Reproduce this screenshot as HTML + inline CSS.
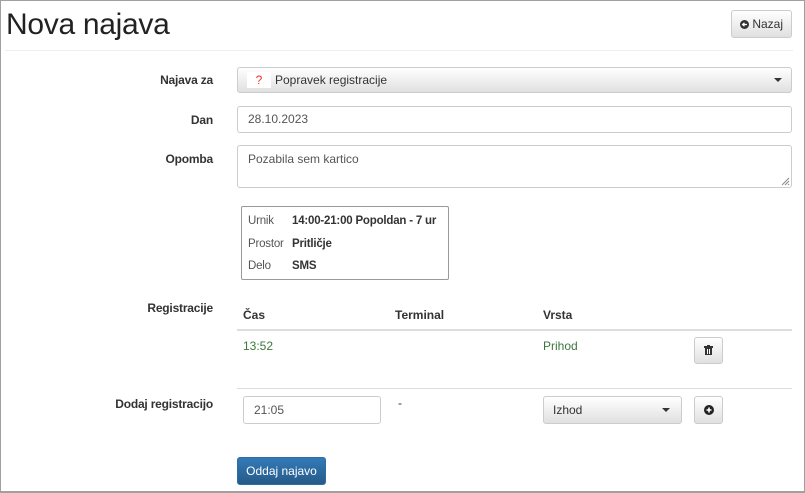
<!DOCTYPE html>
<html><head><meta charset="utf-8"><style>
*{box-sizing:border-box;margin:0;padding:0}
body{width:805px;height:493px;overflow:hidden;font-family:"Liberation Sans",sans-serif;font-size:12px;color:#333;background:#fff;position:relative}
.frame{position:absolute;left:0;top:0;width:805px;height:493px;border:1px solid #a0a0a0;border-bottom-width:2px}
.abs{position:absolute}
h1{position:absolute;left:6px;top:8px;font-size:30px;font-weight:normal;color:#222;letter-spacing:-0.3px}
.hr{position:absolute;left:5px;top:50px;width:788px;height:1px;background:#eee}
.btn{position:absolute;border:1px solid #ccc;border-radius:3px;background:linear-gradient(#fff,#e0e0e0);}
.lbl{position:absolute;right:592px;font-weight:bold;text-align:right;color:#333;letter-spacing:-0.2px}
.inp{position:absolute;border:1px solid #ccc;border-radius:3px;background:#fff;padding:0 10px;color:#555;font-size:12px}
.caret{position:absolute;width:0;height:0;border-left:4px solid transparent;border-right:4px solid transparent;border-top:4px solid #333}
.info{font-size:11.5px;letter-spacing:-0.2px}
</style></head><body>
<div class="frame"></div>
<h1>Nova najava</h1>
<div class="btn" style="left:731px;top:10px;width:61px;height:28px;font-size:12px;line-height:26px;text-align:center;color:#333"><svg width="9" height="9" style="vertical-align:-1px"><circle cx="4.5" cy="4.5" r="4.5" fill="#333"/><path d="M7 4.5H3M4.5 2.8L2.6 4.5L4.5 6.2" stroke="#fff" stroke-width="1.3" fill="none"/></svg> Nazaj</div>
<div class="hr"></div>

<div class="lbl" style="top:73px">Najava za</div>
<div class="btn" style="left:237px;top:67px;width:555px;height:26px"></div>
<div class="abs" style="left:247px;top:72px;width:24px;height:16px;background:#fff;color:#e33;text-align:center;line-height:16px">?</div>
<div class="abs" style="left:275px;top:73px;color:#333">Popravek registracije</div>
<div class="caret" style="left:774px;top:78px"></div>

<div class="lbl" style="top:113px">Dan</div>
<div class="inp" style="left:237px;top:106px;width:555px;height:27px;line-height:25px">28.10.2023</div>

<div class="lbl" style="top:152px">Opomba</div>
<div class="inp" style="left:237px;top:145px;width:555px;height:43px;padding-top:6px">Pozabila sem kartico</div>
<svg class="abs" style="left:780px;top:176px" width="10" height="10"><path d="M9 2L2 9M9 5L5 9M9 8L8 9" stroke="#888" stroke-width="1"/></svg>

<div class="abs" style="left:241px;top:206px;width:208px;height:74px;border:1px solid #999;border-radius:2px"></div>
<div class="abs info" style="left:248px;top:215px;color:#555">Urnik</div>
<div class="abs info" style="left:292px;top:215px;font-weight:bold">14:00-21:00 Popoldan - 7 ur</div>
<div class="abs info" style="left:248px;top:238px;color:#555">Prostor</div>
<div class="abs info" style="left:292px;top:238px;font-weight:bold">Pritličje</div>
<div class="abs info" style="left:248px;top:260px;color:#555">Delo</div>
<div class="abs info" style="left:292px;top:260px;font-weight:bold">SMS</div>

<div class="lbl" style="top:301px">Registracije</div>
<div class="abs" style="left:243px;top:308px;font-weight:bold">Čas</div>
<div class="abs" style="left:395px;top:308px;font-weight:bold">Terminal</div>
<div class="abs" style="left:543px;top:308px;font-weight:bold">Vrsta</div>
<div class="abs" style="left:237px;top:329px;width:555px;height:2px;background:#ddd"></div>
<div class="abs" style="left:243px;top:339px;color:#3c763d">13:52</div>
<div class="abs" style="left:543px;top:339px;color:#3c763d">Prihod</div>
<div class="btn" style="left:694px;top:337px;width:29px;height:27px"></div>
<svg class="abs" style="left:704px;top:345px" width="9" height="10"><rect x="0" y="1" width="9" height="2" fill="#333"/><rect x="3" y="0" width="3" height="1" fill="#333"/><rect x="1" y="3" width="7" height="7" fill="#333"/><rect x="3" y="4" width="1" height="5" fill="#fff"/><rect x="5" y="4" width="1" height="5" fill="#fff"/></svg>
<div class="abs" style="left:237px;top:388px;width:555px;height:1px;background:#ddd"></div>

<div class="lbl" style="top:397px">Dodaj registracijo</div>
<div class="inp" style="left:243px;top:396px;width:138px;height:28px;line-height:26px">21:05</div>
<div class="abs" style="left:398px;top:396px">-</div>
<div class="btn" style="left:543px;top:396px;width:139px;height:28px"></div>
<div class="abs" style="left:553px;top:403px;color:#333">Izhod</div>
<div class="caret" style="left:662px;top:408px"></div>
<div class="btn" style="left:694px;top:396px;width:29px;height:28px"></div>
<svg class="abs" style="left:704px;top:405px" width="10" height="10"><circle cx="5" cy="5" r="5" fill="#222"/><path d="M5 2.5V7.5M2.5 5H7.5" stroke="#fff" stroke-width="1.6"/></svg>

<div class="abs" style="left:237px;top:457px;width:89px;height:28px;border:1px solid #2e6da4;border-radius:3px;background:linear-gradient(#337ab7,#265a88);color:#fff;text-align:center;line-height:26px">Oddaj najavo</div>
</body></html>
